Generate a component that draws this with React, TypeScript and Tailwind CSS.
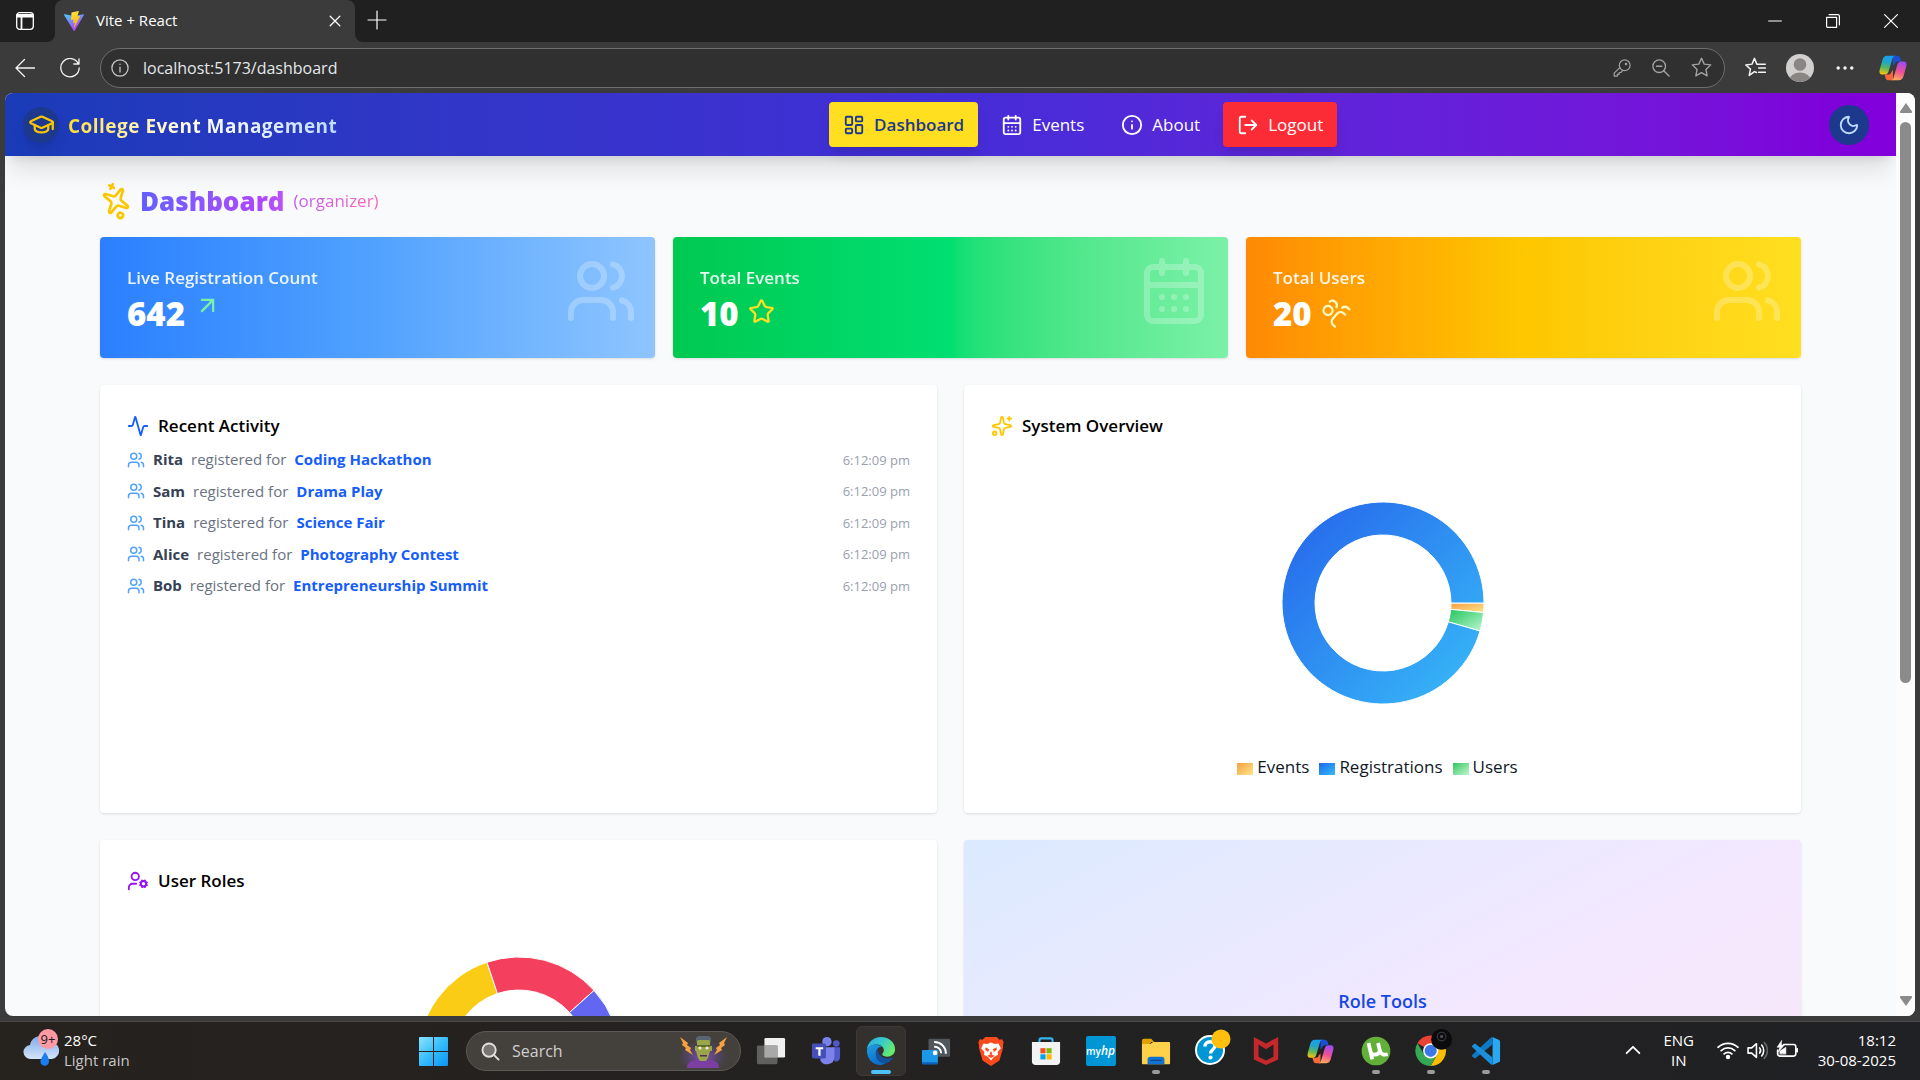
import React from "react";
import {
  Activity,
  ArrowUpRight,
  CalendarDays,
  GraduationCap,
  Info,
  LayoutDashboard,
  LogOut,
  Moon,
  Sparkles,
  Star,
  UserCog,
  Users,
} from "lucide-react";

/* ---------- Browser chrome ---------- */

function ViteLogo() {
  return (
    <svg viewBox="0 0 32 32" className="size-5 shrink-0" aria-hidden="true">
      <defs>
        <linearGradient id="vite-a" x1="0" y1="0" x2="0.6" y2="1">
          <stop offset="0" stopColor="#41d1ff" />
          <stop offset="1" stopColor="#bd34fe" />
        </linearGradient>
        <linearGradient id="vite-b" x1="0.4" y1="0" x2="0.6" y2="1">
          <stop offset="0" stopColor="#ffea83" />
          <stop offset="0.1" stopColor="#ffdd35" />
          <stop offset="1" stopColor="#ffa800" />
        </linearGradient>
      </defs>
      <path fill="url(#vite-a)" d="M31.9 6.5 17.1 31.4a.9.9 0 0 1-1.6 0L.1 6.5A.9.9 0 0 1 1.1 5.2L16 7.9l14.9-2.7a.9.9 0 0 1 1 1.3z" />
      <path fill="url(#vite-b)" d="m23.3.1-11 2.2a.4.4 0 0 0-.3.4l-.7 11.4c0 .3.2.5.5.4l3.1-.7c.3 0 .5.2.5.5l-.9 4.5c-.1.3.2.6.5.5l1.9-.6c.3-.1.6.2.5.5l-1.5 7c-.1.5.5.7.8.3l.1-.2 9-17.9c.1-.3-.1-.7-.5-.6l-3.2.6c-.3 0-.5-.2-.5-.5l2.1-7.2c.1-.3-.2-.6-.4-.6z" />
    </svg>
  );
}

function CopilotLogo({ id, className }: { id: string; className: string }) {
  return (
    <svg viewBox="0 0 32 32" className={className} aria-hidden="true">
      <defs>
        <linearGradient id={id + "-a"} x1="0.5" y1="0" x2="0.3" y2="1">
          <stop offset="0" stopColor="#1a9ff0" />
          <stop offset="0.35" stopColor="#22a5c8" />
          <stop offset="0.65" stopColor="#5cb85c" />
          <stop offset="1" stopColor="#f8c40e" />
        </linearGradient>
        <linearGradient id={id + "-b"} x1="0.6" y1="0" x2="0.3" y2="1">
          <stop offset="0" stopColor="#a04bf0" />
          <stop offset="0.5" stopColor="#ee5096" />
          <stop offset="1" stopColor="#ffb057" />
        </linearGradient>
      </defs>
      <path d="M16 2h5c2 0 3 1 3.6 3l1 3.5h-4c-2 0-3 1-3.7 3L16 14z" fill="#1b4fd0" />
      <path d="M16 30h-5c-2 0-3-1-3.6-3l-1-3.5h4c2 0 3-1 3.7-3L16 18z" fill="#f4683c" />
      <path d="M9.5 2H19c-2 0-3 1-3.6 3l-4.5 15c-.6 2-2 3.500-4.400 3.500H4C1 23.500 0 21 .8 18L4 6.500C5 3.500 6.500 2 9.500 2z" fill={`url(#${id}-a)`} />
      <path d="M22.5 30H13c2 0 3-1 3.6-3l4.500-15c.6-2 2-3.500 4.400-3.500H28c3 0 4 2.500 3.200 5.500L28 25.500c-1 3-2.500 4.500-5.500 4.500z" fill={`url(#${id}-b)`} />
    </svg>
  );
}

function LineIcon({
  className,
  width = 1.5,
  children,
}: {
  className: string;
  width?: number;
  children: React.ReactNode;
}) {
  return (
    <svg
      viewBox="0 0 20 20"
      fill="none"
      stroke="currentColor"
      strokeWidth={width}
      strokeLinecap="round"
      strokeLinejoin="round"
      className={className}
      aria-hidden="true"
    >
      {children}
    </svg>
  );
}

const starPath = "M10 1.2 12.6 6.8 18.8 7.5 14.2 11.8 15.4 18 10 14.9 4.6 18 5.8 11.8 1.2 7.5 7.4 6.8z";

function TabStrip() {
  return (
    <div className="flex h-[42px] text-white">
      <div className="flex w-[55px] items-center rounded-br-lg bg-[#202020] pl-[15px]">
        <button aria-label="Tab actions">
          <LineIcon className="size-5" width={1.3}>
            <rect x="1.7" y="1.7" width="16.6" height="16.6" rx="3" />
            <path d="M2 4h16M2 5.5h16M6.5 5.5v12.5" strokeWidth="1.8" />
          </LineIcon>
        </button>
      </div>
      <div className="w-[300px] bg-[#202020]">
        <div className="flex h-full items-center rounded-t-lg bg-[#3b3b3b] pr-3 pl-[9px]">
          <ViteLogo />
          <span className="mb-0.5 ml-3 text-[15px]">Vite + React</span>
          <button aria-label="Close tab" className="ml-auto">
            <LineIcon className="size-4" width={1.6}>
              <path d="m4 4 12 12M16 4 4 16" />
            </LineIcon>
          </button>
        </div>
      </div>
      <div className="flex flex-1 items-center rounded-bl-lg bg-[#202020] pl-3">
        <button aria-label="New tab" className="mb-0.5">
          <LineIcon className="size-5" width={1.2}>
            <path d="M10 1v18M1 10h18" />
          </LineIcon>
        </button>
        <div className="ml-auto flex h-full">
          <button aria-label="Minimize" className="grid w-[58px] place-items-center">
            <LineIcon className="size-4" width={1.3}>
              <path d="M2 10h16" />
            </LineIcon>
          </button>
          <button aria-label="Restore" className="grid w-[58px] place-items-center">
            <LineIcon className="size-4" width={1.5}>
              <path d="M2 5.5h12.5V18H3a1 1 0 0 1-1-1zM5 2h11a2 2 0 0 1 2 2v11" />
            </LineIcon>
          </button>
          <button aria-label="Close" className="grid w-[58px] place-items-center">
            <LineIcon className="size-4" width={1.5}>
              <path d="m2 2 16 16M18 2 2 18" />
            </LineIcon>
          </button>
        </div>
      </div>
    </div>
  );
}

function Toolbar() {
  return (
    <div className="flex h-[51px] items-center pr-[13px] pl-[15px] text-gray-100">
      <button aria-label="Back">
        <LineIcon className="size-5" width={1.3}>
          <path d="M19.5 10H1M9.5 1.5 1 10l8.5 8.5" />
        </LineIcon>
      </button>
      <button aria-label="Refresh" className="ml-[25px]">
        <LineIcon className="size-5" width={1.3}>
          <path d="M18.2 5.5A9.2 9.2 0 1 0 19.2 10M19 .8v5.2h-5.2" />
        </LineIcon>
      </button>
      <div className="ml-5 flex h-10 flex-1 items-center rounded-full border border-[#6e6e6e] bg-[#303030] pr-3 pl-2.5 text-[#a3a3a3]">
        <LineIcon className="size-[18px] text-[#c8c8c8]" width={1.4}>
          <circle cx="10" cy="10" r="9" />
          <path d="M10 9v5.5M10 5.8v.2" />
        </LineIcon>
        <input
          aria-label="Address"
          defaultValue="localhost:5173/dashboard"
          className="ml-3.5 min-w-0 flex-1 bg-transparent text-[16px] text-gray-200 outline-none"
        />
        <button aria-label="Passwords">
          <LineIcon className="size-[18px]" width={1.3}>
            <circle cx="13" cy="7" r="6" />
            <circle cx="14.5" cy="5.5" r=".8" />
            <path d="m7.5 9.5-6.2 6.2V19h3.500v-2h2v-2h2l2-2.300" />
          </LineIcon>
        </button>
        <button aria-label="Zoom" className="ml-[21px]">
          <LineIcon className="size-[18px]" width={1.5}>
            <circle cx="8" cy="8" r="7" />
            <path d="m13 13 6 6M5 8h6" />
          </LineIcon>
        </button>
        <button aria-label="Add to favorites" className="ml-[21px]">
          <LineIcon className="size-[21px]" width={1.3}>
            <path d={starPath} />
          </LineIcon>
        </button>
      </div>
      <button aria-label="Favorites" className="ml-5">
        <LineIcon className="size-[21px]" width={1.4}>
          <path d="M11 14.8 9 13.9 4 17.5l1.2-6L.8 7.6l5.9-.8L9 1.3l2.3 5.5h8M13 10.5h6.5M13 14.5h6.5" />
        </LineIcon>
      </button>
      <button aria-label="Profile" className="ml-5">
        <svg viewBox="0 0 28 28" className="size-7" aria-hidden="true">
          <clipPath id="avatar-clip">
            <circle cx="14" cy="14" r="14" />
          </clipPath>
          <g clipPath="url(#avatar-clip)">
            <rect width="28" height="28" fill="#d2d0ce" />
            <circle cx="14" cy="10.5" r="6.3" fill="#8a8684" />
            <ellipse cx="14" cy="26" rx="10.5" ry="7.5" fill="#8a8684" />
          </g>
        </svg>
      </button>
      <button aria-label="Settings and more" className="ml-[22px]">
        <svg viewBox="0 0 18 18" className="size-[18px]" fill="currentColor" aria-hidden="true">
          <circle cx="2.2" cy="9" r="1.7" />
          <circle cx="9" cy="9" r="1.7" />
          <circle cx="15.8" cy="9" r="1.7" />
        </svg>
      </button>
      <button aria-label="Copilot" className="ml-[25px]">
        <CopilotLogo id="cp-bar" className="size-7" />
      </button>
    </div>
  );
}

/* ---------- Dashboard page ---------- */

function NavBar() {
  const link = "flex h-[45px] items-center gap-[9px] rounded px-3.5 text-[17px]";
  return (
    <nav className="relative z-10 flex h-[63px] shrink-0 items-center justify-between bg-linear-to-r from-blue-800 via-indigo-700 to-purple-700 pr-[27px] pl-[18px] text-white shadow-xl">
      <div className="flex items-center gap-[9px]">
        <span className="grid size-9 place-items-center rounded-full bg-blue-900 shadow-lg">
          <GraduationCap className="size-[27px] text-yellow-400" />
        </span>
        <span className="mt-1 bg-linear-to-r from-yellow-300 via-white to-blue-200 bg-clip-text text-[19px] font-bold tracking-wide text-transparent">
          College Event Management
        </span>
      </div>
      <div className="flex gap-[9px]">
        <a href="#dashboard" className={link + " bg-[#ffdf20] font-semibold text-blue-900 shadow-lg"}>
          <LayoutDashboard className="size-[22px]" />
          Dashboard
        </a>
        <a href="#events" className={link}>
          <CalendarDays className="size-[22px]" />
          Events
        </a>
        <a href="#about" className={link}>
          <Info className="size-[22px]" />
          About
        </a>
        <button className={link + " bg-[#fb2c36] shadow-lg"}>
          <LogOut className="size-[22px]" />
          Logout
        </button>
      </div>
      <button aria-label="Dark mode" className="grid size-10 place-items-center rounded-full bg-blue-900 text-blue-200">
        <Moon className="size-[22px]" />
      </button>
    </nav>
  );
}

function StatCard({
  label,
  value,
  icon,
  backdrop,
  className,
}: {
  label: string;
  value: string;
  icon: React.ReactNode;
  backdrop: React.ReactNode;
  className: string;
}) {
  return (
    <section className={"relative h-[121px] rounded p-[27px] text-white shadow-sm " + className}>
      <h2 className="text-[17px] leading-7 font-semibold opacity-90">{label}</h2>
      <div className="flex items-center gap-[9px]">
        <span className="text-[33px] leading-[43px] font-extrabold">{value}</span>
        {icon}
      </div>
      <div className="absolute top-[18px] right-[18px] opacity-25">{backdrop}</div>
    </section>
  );
}

type Slice = { from: number; to: number; fill: string };

function point(r: number, deg: number) {
  const a = (deg * Math.PI) / 180;
  return `${(r * Math.cos(a)).toFixed(2)} ${(r * Math.sin(a)).toFixed(2)}`;
}

/* Angles run clockwise from three o'clock. */
function Donut({ slices, label }: { slices: Slice[]; label: string }) {
  return (
    <svg viewBox="-102 -102 204 204" className="size-[204px]" role="img" aria-label={label}>
      <defs>
        <linearGradient id="g-events" x1="0" y1="0" x2="1" y2="1">
          <stop offset="0" stopColor="#f59e42" />
          <stop offset="1" stopColor="#fde68a" />
        </linearGradient>
        <linearGradient id="g-registrations" x1="0" y1="0" x2="1" y2="1">
          <stop offset="0" stopColor="#2563eb" />
          <stop offset="1" stopColor="#38bdf8" />
        </linearGradient>
        <linearGradient id="g-users" x1="0" y1="0" x2="1" y2="1">
          <stop offset="0" stopColor="#22c55e" />
          <stop offset="1" stopColor="#bbf7d0" />
        </linearGradient>
      </defs>
      {slices.map((s) => {
        const large = s.to - s.from > 180 ? 1 : 0;
        return (
          <path
            key={s.from}
            d={`M${point(101, s.from)}A101 101 0 ${large} 1 ${point(101, s.to)}L${point(68, s.to)}A68 68 0 ${large} 0 ${point(68, s.from)}Z`}
            fill={s.fill}
            stroke="#fff"
            strokeWidth="1"
          />
        );
      })}
    </svg>
  );
}

const activity = [
  ["Rita", "Coding Hackathon"],
  ["Sam", "Drama Play"],
  ["Tina", "Science Fair"],
  ["Alice", "Photography Contest"],
  ["Bob", "Entrepreneurship Summit"],
];

const legend = [
  { name: "Events", swatch: "bg-linear-to-br from-[#f59e42] to-[#fde68a]" },
  { name: "Registrations", swatch: "bg-linear-to-br from-[#2563eb] to-[#38bdf8]" },
  { name: "Users", swatch: "bg-linear-to-br from-[#22c55e] to-[#bbf7d0]" },
];

const panel = "h-[428px] rounded bg-white p-[27px] shadow-sm";
const panelTitle = "flex h-7 items-center gap-[9px] text-[17px] font-semibold text-black";

function Dashboard() {
  return (
    <main className="px-[95px] pt-[22px]">
      <div className="flex h-[45px] items-center">
        <Sparkles className="size-8 -rotate-62 text-yellow-400" />
        <h1 className="ml-2 bg-linear-to-r from-indigo-500 via-purple-500 to-pink-400 bg-clip-text text-transparent">
          <span className="text-[26px] leading-9 font-extrabold">Dashboard</span>
          <span className="ml-[9px] align-[4px] text-[17px]">(organizer)</span>
        </h1>
      </div>

      <div className="mt-3.5 grid grid-cols-3 gap-[18px]">
        <StatCard
          label="Live Registration Count"
          value="642"
          className="bg-linear-to-r from-[#2b7fff] via-[#51a2ff] to-[#8ec5ff]"
          icon={<ArrowUpRight className="mb-4 size-[27px] text-green-300" />}
          backdrop={<Users className="size-[72px]" />}
        />
        <StatCard
          label="Total Events"
          value="10"
          className="bg-linear-to-r from-[#00c950] via-[#00df72] to-[#7bf1a8]"
          icon={<Star className="mb-1 size-[27px] text-yellow-300" />}
          backdrop={<CalendarDays className="size-[72px]" />}
        />
        <StatCard
          label="Total Users"
          value="20"
          className="bg-linear-to-r from-[#ff8904] via-[#fdc700] to-[#ffdf20]"
          icon={<Users className="mb-1 size-[27px] -rotate-50 text-yellow-100" />}
          backdrop={<Users className="size-[72px]" />}
        />
      </div>

      <div className="mt-[27px] grid grid-cols-2 gap-[27px]">
        <section className={panel}>
          <h2 className={panelTitle}>
            <Activity className="size-[22px] text-blue-600" />
            Recent Activity
          </h2>
          <ul className="mt-2 flex h-[149px] flex-col justify-between text-[15px]">
            {activity.map(([name, event]) => (
              <li key={name} className="flex h-[23px] items-center">
                <Users className="size-[18px] text-blue-400" />
                <span className="ml-2 font-bold text-gray-700">{name}</span>
                <span className="ml-2 text-gray-500">registered for</span>
                <a href="#event" className="ml-2 font-bold text-blue-600">
                  {event}
                </a>
                <time className="mt-0.5 ml-auto text-[13px] text-gray-400">6:12:09 pm</time>
              </li>
            ))}
          </ul>
        </section>

        <section className={panel}>
          <h2 className={panelTitle}>
            <Sparkles className="size-[22px] text-yellow-400" />
            System Overview
          </h2>
          <div className="mt-[61px] flex justify-center">
            <Donut
              label="System overview"
              slices={[
                { from: 0, to: 5.4, fill: "url(#g-events)" },
                { from: 5.4, to: 16.1, fill: "url(#g-users)" },
                { from: 16.1, to: 360, fill: "url(#g-registrations)" },
              ]}
            />
          </div>
          <ul className="mt-[49px] flex items-center justify-center text-[17px] text-gray-900">
            {legend.map((item) => (
              <li key={item.name} className="mr-2.5 flex items-center gap-1">
                <span className={"mt-1 h-3 w-4 " + item.swatch} />
                {item.name}
              </li>
            ))}
          </ul>
        </section>

        <section className={panel}>
          <h2 className={panelTitle}>
            <UserCog className="size-[22px] text-purple-600" />
            User Roles
          </h2>
          <div className="mt-[61px] flex justify-center">
            <Donut
              label="User roles"
              slices={[
                { from: 180, to: 251.5, fill: "#facc15" },
                { from: 251.5, to: 318, fill: "#f43f5e" },
                { from: 318, to: 360, fill: "#6366f1" },
              ]}
            />
          </div>
        </section>

        <section className="h-[428px] rounded bg-linear-to-br from-blue-100 via-purple-100 to-pink-100 pt-[147px] text-center shadow-sm">
          <h2 className="text-[18px] leading-7 font-semibold text-blue-700">Role Tools</h2>
        </section>
      </div>
    </main>
  );
}

function ScrollBar() {
  return (
    <div className="flex w-[19px] shrink-0 flex-col items-center bg-[#fcfcfc] py-2.5 text-[#8b8b8b]">
      <svg viewBox="0 0 12 10" className="h-2.5 w-3" fill="currentColor" aria-hidden="true">
        <path d="M6 0 12 8.5a1 1 0 0 1-1 1.5H1A1 1 0 0 1 0 8.500z" />
      </svg>
      <div className="mt-[9px] h-[561px] w-[11px] rounded-full bg-[#8b8b8b]" />
      <svg viewBox="0 0 12 10" className="mt-auto h-2.5 w-3 rotate-180" fill="currentColor" aria-hidden="true">
        <path d="M6 0 12 8.5a1 1 0 0 1-1 1.5H1A1 1 0 0 1 0 8.500z" />
      </svg>
    </div>
  );
}

/* ---------- Taskbar ---------- */

function WeatherIcon() {
  return (
    <svg viewBox="0 0 36 40" className="mb-1 h-10 w-9" aria-hidden="true">
      <defs>
        <linearGradient id="cloud" x1="0" y1="0" x2="0" y2="1">
          <stop offset="0" stopColor="#7fa9ea" />
          <stop offset="1" stopColor="#d6e4fa" />
        </linearGradient>
      </defs>
      <path d="M8 31a7 7 0 0 1-1-14 10 10 0 0 1 19-3 8.5 8.5 0 0 1 3 17z" fill="url(#cloud)" />
      <path d="M22 24c3 4 4 7 4 9.5a4.300 4.300 0 0 1-8.600 0C17.400 31 20 28 22 24z" fill="#1a7df0" />
      <circle cx="25" cy="11" r="10" fill="#ff99a4" />
      <text x="25" y="15.5" textAnchor="middle" fontSize="13" fill="#1a1a1a">
        9+
      </text>
    </svg>
  );
}

function StartIcon() {
  return (
    <svg viewBox="0 0 29 29" className="size-[29px]" aria-hidden="true">
      <defs>
        <linearGradient id="start" x1="0" y1="0" x2="1" y2="1">
          <stop offset="0" stopColor="#8be3ff" />
          <stop offset="0.5" stopColor="#36bdfb" />
          <stop offset="1" stopColor="#0a94f5" />
        </linearGradient>
      </defs>
      <path d="M1 0h13v14H0V1a1 1 0 0 1 1-1zM15 0h13a1 1 0 0 1 1 1v13H15zM0 15h14v14H1a1 1 0 0 1-1-1zM15 15h14v13a1 1 0 0 1-1 1H15z" fill="url(#start)" />
    </svg>
  );
}

function MonsterArt() {
  return (
    <svg viewBox="0 0 50 34" className="h-[34px] w-[50px]" aria-hidden="true">
      <defs>
        <radialGradient id="glow">
          <stop offset="0" stopColor="#8a4fd6" stopOpacity="0.9" />
          <stop offset="1" stopColor="#5a4a90" stopOpacity="0" />
        </radialGradient>
      </defs>
      <ellipse cx="25" cy="23" rx="25" ry="17" fill="url(#glow)" />
      <path d="M9 34c0-6 5-8 10-8h12c5 0 10 2 10 8z" fill="#7a3fa0" />
      <path d="M17 12h2V5h13v7h2v5h-2l-2 7-2 3h-6l-2-3-2-7h-1z" fill="#9aa64a" />
      <path d="M18 9V4l2-2h11l2 2v5l-2-3H20z" fill="#5a6472" />
      <path d="M19 11h13v2H19z" fill="#5f6b2c" />
      <circle cx="22" cy="14" r="1.6" fill="#f5e9d0" />
      <circle cx="29" cy="14" r="1.6" fill="#f5e9d0" />
      <path d="M22 21h7v1.5h-7z" fill="#4b3050" />
      <path d="m2 3 8 6-1 2 4 3-1 2 3 5-8-5 1-2-4-3 1-2zM49 3l-8 6 1 2-4 3 1 2-3 5 8-5-1-2 4-3-1-2z" fill="#f9a03f" />
    </svg>
  );
}

function AppSvg({ children }: { children: React.ReactNode }) {
  return (
    <svg viewBox="0 0 32 32" className="size-[30px]" aria-hidden="true">
      {children}
    </svg>
  );
}

const apps: { name: string; art: React.ReactNode; state?: "active" | "open" }[] = [
  {
    name: "Task view",
    art: (
      <AppSvg>
        <rect x="9" y="2" width="22" height="21" rx="1.5" fill="#f0f0f0" />
        <rect x="1" y="10" width="22" height="20" rx="1.5" fill="#6b6b6b" fillOpacity="0.85" />
        <path d="M9 10h14v13H9z" fill="#a8a8a8" />
      </AppSvg>
    ),
  },
  {
    name: "Teams",
    art: (
      <AppSvg>
        <circle cx="17" cy="6" r="5" fill="#7b83eb" />
        <circle cx="27" cy="8" r="3.5" fill="#5059c9" />
        <path d="M23 12h8v10c0 4-3 6-6 5z" fill="#5059c9" />
        <path d="M10 12h15v10a8 8 0 0 1-15 4z" fill="#7b83eb" />
        <rect x="1" y="8" width="15" height="16" rx="1.5" fill="#464eb8" />
        <path d="M5 12h8v2.2H10.2V21H7.8v-6.8H5z" fill="#fff" />
      </AppSvg>
    ),
  },
  {
    name: "Microsoft Edge",
    state: "active",
    art: (
      <AppSvg>
        <defs>
          <linearGradient id="edge-top" x1="0" y1="0" x2="1" y2="0.5">
            <stop offset="0" stopColor="#2aa8e8" />
            <stop offset="0.5" stopColor="#35c8d0" />
            <stop offset="1" stopColor="#66eb6e" />
          </linearGradient>
          <linearGradient id="edge-left" x1="0" y1="0" x2="0.5" y2="1">
            <stop offset="0" stopColor="#1f9fe0" />
            <stop offset="1" stopColor="#0b6cc9" />
          </linearGradient>
        </defs>
        <path d="M1 15C1 7 8 1 16 1c9 0 15 6 15 13 0 5-4 8-8.5 8-4 0-5.5-1.5-5-3 1-1.5 1.5-2.5 1.5-4 0-4-4-6-8-6-5 0-9 2.5-10 6z" fill="url(#edge-top)" />
        <path d="M1 15c1-3.5 4-6 9-6 3 0 5.5 1 7 2.5-4 0-6.5 3.5-6.5 7.5 0 6 5 11 11.5 9-2 2-4.5 3-7 3C7 31 .7 24 1 15z" fill="url(#edge-left)" />
        <path d="M10.5 19c0-2 .5-3.8 2-5.5-.3 5 4 10.5 11 10.5 2.3 0 4-.7 5.5-1.5-1 2.5-3.5 5.5-7 6.5-6.5 1-11.5-4-11.5-10z" fill="#1450a0" />
      </AppSvg>
    ),
  },
  {
    name: "Cast",
    art: (
      <AppSvg>
        <rect x="8" y="3" width="23" height="19" rx="1" fill="#50565c" />
        <rect x="1" y="15" width="17" height="15" rx="1" fill="#1b98e8" />
        <path d="M1 28h17v1a1 1 0 0 1-1 1H2a1 1 0 0 1-1-1z" fill="#0b62b8" />
        <circle cx="15" cy="18" r="2.5" fill="#fff" />
        <path d="M14 11.5a7 7 0 0 1 7.5 7M14 6.5A12 12 0 0 1 26.5 19" fill="none" stroke="#fff" strokeWidth="2.2" />
      </AppSvg>
    ),
  },
  {
    name: "Brave",
    art: (
      <AppSvg>
        <path d="M10 1h12l3 3 3-.5 1.5 3.5-.8 3 .3 2-4 14L16 32 7 26 3 12l.3-2-.8-3L4 3.500 7 4z" fill="#fb4b1e" />
        <path d="m8 8 4 .5L16 7l4 1.5 4-.5 2.5 5-3.5 4 .5 3-4.5 2.5L16 26l-3-3.5L8.5 20l.5-3-3.5-4z" fill="#fff" />
        <path d="m10 12 4 2-1 3-3-2zM22 12l-4 2 1 3 3-2zM16 16l1.5 3L16 20.5 14.5 19zM12 21l4-1.5 4 1.5-4 2.5z" fill="#fb4b1e" />
      </AppSvg>
    ),
  },
  {
    name: "Microsoft Store",
    art: (
      <AppSvg>
        <path d="M9 8V4.5A2 2 0 0 1 11 2.5h10a2 2 0 0 1 2 2V8" fill="none" stroke="#35b4ee" strokeWidth="2.2" />
        <path d="M1 6.5h30V27a4 4 0 0 1-4 4H5a4 4 0 0 1-4-4z" fill="#f3f3f3" />
        <path d="M10 13h5.5v5.5H10z" fill="#f25022" />
        <path d="M16.5 13H22v5.5h-5.5z" fill="#7fba00" />
        <path d="M10 19.5h5.5V25H10z" fill="#00a4ef" />
        <path d="M16.5 19.5H22V25h-5.5z" fill="#ffb900" />
      </AppSvg>
    ),
  },
  {
    name: "myHP",
    art: (
      <span className="grid size-[30px] place-items-center rounded-[2px] bg-[#0096d6] text-[10px] font-semibold text-white">
        <span>
          my<i className="text-[12px]">hp</i>
        </span>
      </span>
    ),
  },
  {
    name: "File Explorer",
    state: "open",
    art: (
      <AppSvg>
        <path d="M1 5a2 2 0 0 1 2-2h8l3 3.5h-3L9 9H1z" fill="#e0a100" />
        <path d="M1 8.5h9l3-2h17a1 1 0 0 1 1 1V29a1 1 0 0 1-1 1H2a1 1 0 0 1-1-1z" fill="#ffd04a" />
        <path d="M7 30v-5a3 3 0 0 1 3-3h12a3 3 0 0 1 3 3v5z" fill="#1173cf" />
        <path d="M10 26h12" stroke="#0a4a90" strokeWidth="1.3" />
      </AppSvg>
    ),
  },
  {
    name: "HP Support Assistant",
    art: (
      <svg viewBox="0 0 38 38" className="-mt-2 ml-[5px] size-[38px]" aria-hidden="true">
        <circle cx="16" cy="22" r="14" fill="#0096d6" stroke="#fff" strokeWidth="2" />
        <path d="M11 18.5c0-3 2.2-4.7 5-4.7s5 1.7 5 4.3c0 3.3-4.5 3.5-4.5 7.4" fill="none" stroke="#fff" strokeWidth="3.4" />
        <circle cx="16.5" cy="29.5" r="2.1" fill="#fff" />
        <circle cx="27" cy="11" r="9.5" fill="#ffbf0f" />
      </svg>
    ),
  },
  {
    name: "McAfee",
    art: (
      <AppSvg>
        <path d="M3 1 16 8l13-7v24l-13 6L3 25zM8 9v13l8 4 8-4V9l-8 5z" fill="#c4282d" fillRule="evenodd" />
      </AppSvg>
    ),
  },
  { name: "Copilot", art: <CopilotLogo id="cp-task" className="size-[27px]" /> },
  {
    name: "uTorrent",
    state: "open",
    art: (
      <AppSvg>
        <circle cx="16" cy="16" r="15.3" fill="#62b03a" />
        <path d="M8 7.5 12 25M10.2 17c1.3 4 8 4 10-1l-2-8.5M20.2 15.5c.8 4 3.8 5 8.3 4" fill="none" stroke="#fff" strokeWidth="4" />
      </AppSvg>
    ),
  },
  {
    name: "Google Chrome",
    state: "open",
    art: (
      <svg viewBox="0 0 40 40" className="-mt-2 ml-[7px] size-[38px]" aria-hidden="true">
        <path d="M16.5 24 2.6 16A16 16 0 0 1 30.4 16z" fill="#ea4335" />
        <path d="M30.4 16a16 16 0 0 1-13.9 24l6.9-12V16z" fill="#fbbc05" />
        <path d="M2.6 16a16 16 0 0 0 13.9 24l6.9-12H9.6z" fill="#34a853" />
        <circle cx="16.5" cy="24" r="8" fill="#fff" />
        <circle cx="16.5" cy="24" r="6.4" fill="#3b78e7" />
        <circle cx="28" cy="12" r="11" fill="#0b0b0d" />
        <circle cx="28" cy="9" r="4.5" fill="none" stroke="#3a3a40" strokeWidth="1.2" />
        <circle cx="28" cy="9" r="1.8" fill="#4a4a50" />
      </svg>
    ),
  },
  {
    name: "Visual Studio Code",
    state: "open",
    art: (
      <AppSvg>
        <path d="m23 1 7 3.2a2 2 0 0 1 1 1.8v20a2 2 0 0 1-1 1.8L23 31z" fill="#2aa9f2" />
        <path d="M23 1v8L5 23.5a1.3 1.3 0 0 1-1.7 0L1.5 22a1.3 1.3 0 0 1 0-2L21 1.8z" fill="#0f79c4" />
        <path d="M23 31v-8L5 8.5a1.3 1.3 0 0 0-1.7 0L1.5 10a1.3 1.3 0 0 0 0 2L21 30.2z" fill="#1a90dc" />
      </AppSvg>
    ),
  },
];

function TaskBar() {
  return (
    <footer className="grid h-[59px] shrink-0 grid-cols-[1fr_auto_1fr] items-center border-t border-[#4a4a48] bg-linear-to-r from-[#26221e] to-[#202124] pr-6 pl-[23px] text-white">
      <button className="mb-0.5 flex items-center gap-[5px] text-left text-[15px] leading-5">
        <WeatherIcon />
        <span>
          <span className="block">28°C</span>
          <span className="block text-[#c8c8c8]">Light rain</span>
        </span>
      </button>

      <div className="flex h-full items-center">
        <button aria-label="Start" className="grid w-[55px] place-items-center">
          <StartIcon />
        </button>
        <label className="mr-0.5 ml-[5px] flex h-10 w-[275px] items-center rounded-full border border-[#5b5855] bg-[#44403c] pr-3 pl-3.5">
          <LineIcon className="size-[19px] text-[#e0e0e0]" width={2}>
            <circle cx="8.5" cy="8.5" r="7" fill="#77736f" />
            <path d="m14 14 4.5 4.5" />
          </LineIcon>
          <input
            aria-label="Search"
            placeholder="Search"
            className="ml-3 w-0 flex-1 bg-transparent text-[16px] outline-none placeholder:text-[#d0cecc]"
          />
          <MonsterArt />
        </label>
        {apps.map((app) => (
          <button key={app.name} aria-label={app.name} className="relative grid h-full w-[55px] place-items-center">
            <span
              className={
                app.state === "active"
                  ? "grid h-[50px] w-[50px] place-items-center rounded-md border border-[#3c3936] bg-[#33302d]"
                  : "grid place-items-center"
              }
            >
              {app.art}
            </span>
            {app.state === "active" && <span className="absolute bottom-1.5 h-1 w-5 rounded-full bg-[#4cc2ff]" />}
            {app.state === "open" && <span className="absolute bottom-1.5 h-1 w-2 rounded-full bg-[#9a9a9a]" />}
          </button>
        ))}
      </div>

      <div className="mb-0.5 flex items-center justify-end text-[15px] leading-5">
        <button aria-label="Show hidden icons">
          <LineIcon className="size-4" width={2.2}>
            <path d="m2 14 8-8 8 8" />
          </LineIcon>
        </button>
        <button className="ml-5 w-9 text-center">
          ENG
          <br />
          IN
        </button>
        <button aria-label="Network, volume and battery" className="ml-5 flex items-center gap-2">
          <LineIcon className="size-[22px]" width={1.6}>
            <path d="M1 7.5a13 13 0 0 1 18 0M3.8 10.5a9 9 0 0 1 12.4 0M6.5 13.5a5 5 0 0 1 7 0" />
            <circle cx="10" cy="16.3" r="1.2" fill="currentColor" />
          </LineIcon>
          <LineIcon className="size-[21px]" width={1.5}>
            <path d="M1 7.5v5h3.5L9 16.5v-13L4.5 7.5zM12 7.5a4 4 0 0 1 0 5M14 4.8a8 8 0 0 1 0 10.4" />
            <path d="M16.5 2.5a11 11 0 0 1 0 15" stroke="#666" />
          </LineIcon>
          <LineIcon className="size-[22px]" width={1.5}>
            <path d="M7 5h9a2 2 0 0 1 2 2v6.5a2 2 0 0 1-2 2H3.5a2 2 0 0 1-2-2V10M19.5 9v2.5" />
            <path d="M5 1.5 1 7.5h2.5L2 12l5.5-6.5H5z" fill="currentColor" strokeWidth=".5" />
            <path d="M3.5 13.5V11L9 7.5v6z" fill="currentColor" strokeWidth=".5" />
          </LineIcon>
        </button>
        <button className="ml-5 text-right">
          18:12
          <br />
          30-08-2025
        </button>
      </div>
    </footer>
  );
}

export default function App() {
  return (
    <div className="flex h-screen flex-col overflow-hidden bg-[#3b3b3b] font-['Open_Sans','Noto_Sans',sans-serif]">
      <header className="shrink-0">
        <TabStrip />
        <Toolbar />
      </header>
      <div className="mx-[5px] mb-[5px] flex min-h-0 flex-1 overflow-hidden rounded-lg bg-gray-50">
        <div className="flex min-w-0 flex-1 flex-col overflow-hidden">
          <NavBar />
          <Dashboard />
        </div>
        <ScrollBar />
      </div>
      <TaskBar />
    </div>
  );
}
